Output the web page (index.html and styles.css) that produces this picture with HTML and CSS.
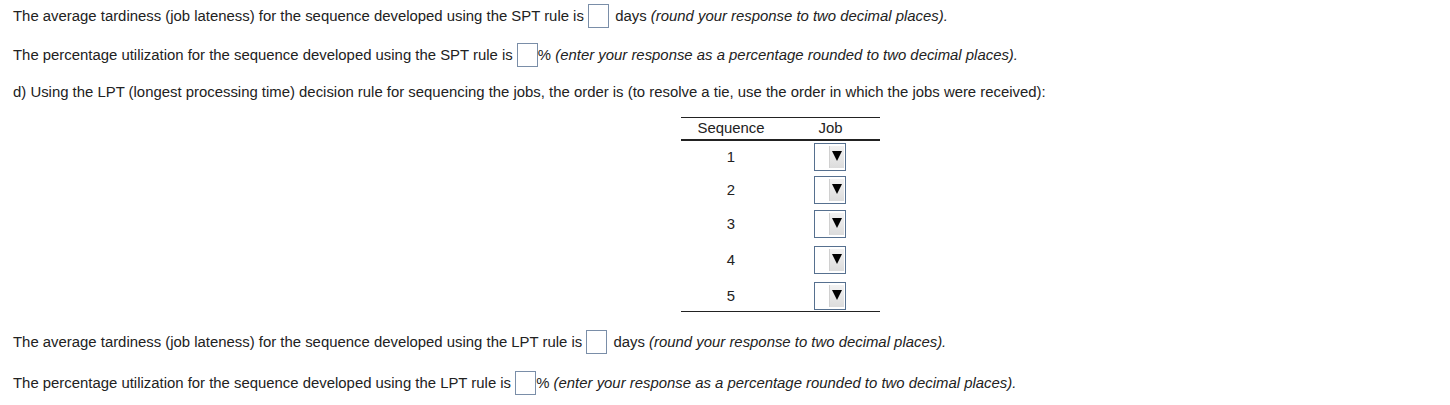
FILE: index.html
```html
<!DOCTYPE html>
<html>
<head>
<meta charset="utf-8">
<link rel="stylesheet" href="styles.css">
</head>
<body>
<div class="page">
  <p class="line first">The average tardiness (job lateness) for the sequence developed using the SPT rule is <span class="box gapr"></span> days <i>(round your response to two decimal places).</i></p>
  <p class="line">The percentage utilization for the sequence developed using the SPT rule is <span class="box"></span>% <i>(enter your response as a percentage rounded to two decimal places).</i></p>
  <p class="line plain">d) Using the LPT (longest processing time) decision rule for sequencing the jobs, the order is (to resolve a tie, use the order in which the jobs were received):</p>
  <div class="tablewrap">
    <table class="seq">
      <thead>
        <tr><th>Sequence</th><th>Job</th></tr>
      </thead>
      <tbody>
        <tr class="r1"><td>1</td><td><span class="sel"><span class="btn"><span class="tri"></span></span></span></td></tr>
        <tr class="r2"><td>2</td><td><span class="sel"><span class="btn"><span class="tri"></span></span></span></td></tr>
        <tr class="r3"><td>3</td><td><span class="sel"><span class="btn"><span class="tri"></span></span></span></td></tr>
        <tr class="r4"><td>4</td><td><span class="sel"><span class="btn"><span class="tri"></span></span></span></td></tr>
        <tr class="r5"><td>5</td><td><span class="sel"><span class="btn"><span class="tri"></span></span></span></td></tr>
      </tbody>
    </table>
  </div>
  <p class="line after">The average tardiness (job lateness) for the sequence developed using the LPT rule is <span class="box gapr"></span> days <i>(round your response to two decimal places).</i></p>
  <p class="line last">The percentage utilization for the sequence developed using the LPT rule is <span class="box"></span>% <i>(enter your response as a percentage rounded to two decimal places).</i></p>
</div>
</body>
</html>
```

FILE: styles.css
```css
html, body {
  margin: 0;
  padding: 0;
  background: #ffffff;
}
.page {
  padding: 4px 0 0 13px;
  font-family: "Liberation Sans", Arial, sans-serif;
  font-size: 14.9px;
  color: #222222;
}
.line {
  margin: 15px 0 0 0;
  height: 24px;
  line-height: 24px;
  white-space: nowrap;
}
.line.first {
  margin-top: 0;
}
.line.plain {
  margin-top: 13px;
}
.line.after {
  margin-top: 18px;
}
.line.last {
  margin-top: 17px;
}
.box {
  display: inline-block;
  box-sizing: border-box;
  width: 21px;
  height: 24px;
  border: 1px solid #7a8ea8;
  background: #fff;
  vertical-align: top;
  margin-left: 0;
}
.box.gapr {
  margin-right: 2px;
}
.tablewrap {
  margin-top: 13px;
  padding-left: 668px;
}
.seq {
  border-collapse: collapse;
  width: 199px;
  border-top: 1px solid #222;
  border-bottom: 1px solid #222;
}
.seq th {
  font-weight: normal;
  height: 21px;
  padding: 0;
  line-height: 21px;
  border-bottom: 2px solid #222;
  text-align: center;
}
.seq th:first-child, .seq td:first-child {
  width: 100px;
}
.seq td {
  padding: 2px 0 4px 0;
  height: 28px;
  text-align: center;
  vertical-align: top;
  line-height: 28px;
}
.seq tr.r1 td { padding-bottom: 3px; }
.seq tr.r2 td { padding-bottom: 4px; }
.seq tr.r3 td { padding-bottom: 6px; }
.seq tr.r4 td { padding-bottom: 6px; }
.seq tr.r5 td { padding-bottom: 1px; }
.sel {
  display: inline-block;
  box-sizing: border-box;
  width: 32px;
  height: 28px;
  border: 1px solid #56708f;
  background: #fff;
  vertical-align: top;
  position: relative;
  margin-left: -2px;
}
.btn {
  position: absolute;
  right: 1px;
  top: 2px;
  bottom: 2px;
  width: 15px;
  box-sizing: border-box;
  background: linear-gradient(#f2f2f2, #dcdcdc);
  border-left: 1px solid #d0d0d0;
  display: flex;
  align-items: center;
  justify-content: center;
}
.tri {
  width: 0;
  height: 0;
  border-left: 5px solid transparent;
  border-right: 5px solid transparent;
  border-top: 10px solid #000;
  margin-top: -2px;
}
```
